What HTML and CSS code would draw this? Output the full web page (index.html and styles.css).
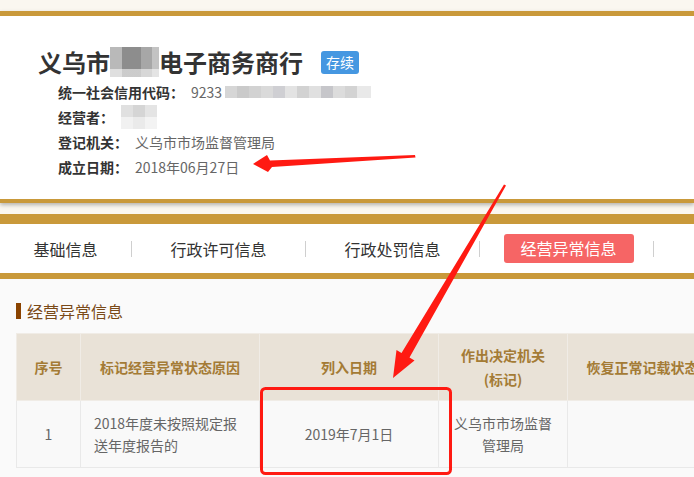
FILE: index.html
```html
<!DOCTYPE html>
<html lang="zh-CN">
<head>
<meta charset="utf-8">
<title>经营异常信息</title>
<link rel="stylesheet" href="styles.css">
</head>
<body>
<div class="page">
  <header class="card">
    <h1 class="title">
      <span>义乌市</span><span class="mosaic m-title"></span><span>电子商务商行</span>
      <span class="badge">存续</span>
    </h1>
    <dl class="info">
      <div class="row"><dt>统一社会信用代码：</dt><dd class="v-code">9233<span class="mosaic m-code"></span></dd></div>
      <div class="row"><dt>经营者：</dt><dd class="v-owner"><span class="mosaic m-owner"></span></dd></div>
      <div class="row"><dt>登记机关：</dt><dd class="v-reg">义乌市市场监督管理局</dd></div>
      <div class="row"><dt>成立日期：</dt><dd class="v-date">2018年06月27日</dd></div>
    </dl>
  </header>

  <nav class="tabs">
    <a class="tab tab-first">基础信息</a>
    <span class="sep"></span>
    <a class="tab">行政许可信息</a>
    <span class="sep"></span>
    <a class="tab">行政处罚信息</a>
    <span class="sep"></span>
    <a class="tab"><span class="active">经营异常信息</span></a>
    <span class="sep"></span>
  </nav>

  <section class="content">
    <h2 class="sec-title">经营异常信息</h2>
    <table class="grid">
      <colgroup>
        <col class="c1"><col class="c2"><col class="c3"><col class="c4"><col class="c5">
      </colgroup>
      <thead>
        <tr>
          <th>序号</th>
          <th>标记经营异常状态原因</th>
          <th>列入日期</th>
          <th>作出决定机关<br>(标记)</th>
          <th>恢复正常记载状态原因</th>
        </tr>
      </thead>
      <tbody>
        <tr>
          <td>1</td>
          <td class="left">2018年度未按照规定报送年度报告的</td>
          <td>2019年7月1日</td>
          <td>义乌市市场监督管理局</td>
          <td></td>
        </tr>
      </tbody>
    </table>
  </section>

  <svg class="marks" width="694" height="477" viewBox="0 0 694 477" xmlns="http://www.w3.org/2000/svg">
    <polygon fill="#ff1a12" points="253,164 267,155 270,160.5 415,155 415.5,157.5 272,167 268,172"/>
    <polygon fill="#ff1a12" points="393,378 396.5,350 401.5,353 504,184.5 506,185.5 409.5,357.5 414.5,360.5"/>
    <rect x="261.5" y="388.5" width="189" height="85" rx="4" ry="4" fill="none" stroke="#ff1a12" stroke-width="3"/>
  </svg>
</div>
</body>
</html>
```

FILE: styles.css
```css
html, body {
  margin: 0;
  padding: 0;
}

body {
  width: 694px;
  height: 477px;
  overflow: hidden;
  background: #faf7f0;
  font-family: "Noto Sans CJK SC", "Noto Sans", "Liberation Sans", sans-serif;
  color: #333;
}

.page {
  position: relative;
  width: 694px;
  height: 477px;
  overflow: hidden;
}

/* ---------- top card ---------- */
.card {
  margin-top: 11px;
  background: #fff;
  border-top: 5px solid #c9993a;
  border-bottom: 4px solid #c9993a;
  box-shadow: 0 2px 4px rgba(0, 0, 0, 0.28);
  height: 183px;
  box-sizing: content-box;
  padding: 0;
}

.title {
  display: flex;
  align-items: center;
  margin: 0;
  padding: 31px 0 0 38px;
  height: 30px;
  font-size: 24px;
  font-weight: 700;
  line-height: 30px;
  color: #333;
}

.mosaic {
  display: inline-block;
}

.m-title {
  width: 49px;
  height: 30px;
  background:
    linear-gradient(180deg, transparent 0 22px, rgba(255,255,255,0.55) 22px 30px),
    linear-gradient(90deg, #b9b9b9 0 12px, #8d8d8d 12px 31px, #a7a7a7 31px 42px, #c3c3c3 42px 49px);
}

.badge {
  margin-left: 18px;
  display: inline-block;
  height: 23px;
  line-height: 23px;
  padding: 0 5px;
  background: #4597e1;
  color: #fff;
  font-size: 14px;
  font-weight: 400;
  border-radius: 3px;
}

.info {
  margin: 2px 0 0 58px;
  padding: 0;
}

.row {
  display: flex;
  align-items: center;
  height: 25px;
  font-size: 14px;
}

.row dt {
  font-weight: 700;
  color: #333;
  padding-right: 7px;
}

.row dd {
  margin: 0;
  color: #666;
  display: flex;
  align-items: center;
}

.v-code { margin-left: 11px; }
.v-owner { margin-left: 5px; }
.v-reg { margin-left: 21px; }
.v-date { margin-left: 9px; }

.m-code {
  width: 146px;
  height: 12px;
  margin-left: 3px;
  background: linear-gradient(90deg,
    #d6d6d6 0 12px, #cacaca 12px 24px, #d2d2d2 24px 36px, #dadada 36px 48px,
    #cfcfd3 48px 60px, #e3e3e3 60px 72px, #d2d2d2 72px 84px, #e0e0e0 84px 96px,
    #c6c6ca 96px 108px, #dcdcdc 108px 120px, #d3d3d3 120px 132px, #e9e9e9 132px 146px);
}

.m-owner {
  width: 36px;
  height: 24px;
  background:
    linear-gradient(90deg, #e0e0e0 0 12px, #d5d5d5 12px 24px, #e4e4e4 24px 36px) top / 36px 12px no-repeat,
    linear-gradient(90deg, #f1f1f1 0 12px, #eaeaea 12px 24px, #f3f3f3 24px 36px) bottom / 36px 12px no-repeat;
}

/* ---------- tabs ---------- */
.tabs {
  margin-top: 11px;
  display: flex;
  align-items: center;
  height: 49px;
  background: #fff;
  border-top: 10px solid #c9993a;
  border-bottom: 6px solid #c9993a;
}

.tab {
  width: 173px;
  display: flex;
  justify-content: center;
  align-items: center;
  font-size: 16px;
  color: #333;
}

.tab-first {
  width: 131px;
}

.sep {
  width: 1px;
  height: 16px;
  background: #cfcfcf;
}

.active {
  display: inline-block;
  width: 130px;
  height: 29px;
  line-height: 29px;
  text-align: center;
  background: #f66565;
  color: #fff;
  border-radius: 3px;
  margin-left: 4px;
}

/* ---------- content ---------- */
.content {
  background: #fafafa;
  padding: 20px 0 0 16px;
  height: 300px;
}

.sec-title {
  margin: 0 0 10px;
  display: flex;
  align-items: center;
  height: 24px;
  font-size: 16px;
  font-weight: 400;
  color: #7a4a18;
}

.sec-title::before {
  content: "";
  display: inline-block;
  width: 5px;
  height: 16px;
  margin-right: 6px;
  background: #8a4300;
}

.grid {
  table-layout: fixed;
  width: 729px;
  border-collapse: collapse;
  font-size: 14px;
}

.c1 { width: 64px; }
.c2 { width: 179px; }
.c3 { width: 179px; }
.c4 { width: 129px; }
.c5 { width: 178px; }

.grid th,
.grid td {
  border: 1px solid #e9e9e9;
  padding: 0 12px;
  text-align: center;
  vertical-align: middle;
}

.grid thead tr {
  height: 67px;
}

.grid th {
  background: #e9e2d7;
  color: #a47b35;
  font-weight: 700;
  line-height: 24px;
  border-color: #f0ece6;
}

.grid tbody tr {
  height: 67px;
}

.grid td {
  background: #f9f9f9;
  color: #666;
  line-height: 22px;
}

.grid td.left {
  text-align: left;
  padding-left: 13px;
}

/* ---------- annotation overlay ---------- */
.marks {
  position: absolute;
  left: 0;
  top: 0;
  pointer-events: none;
}
```
